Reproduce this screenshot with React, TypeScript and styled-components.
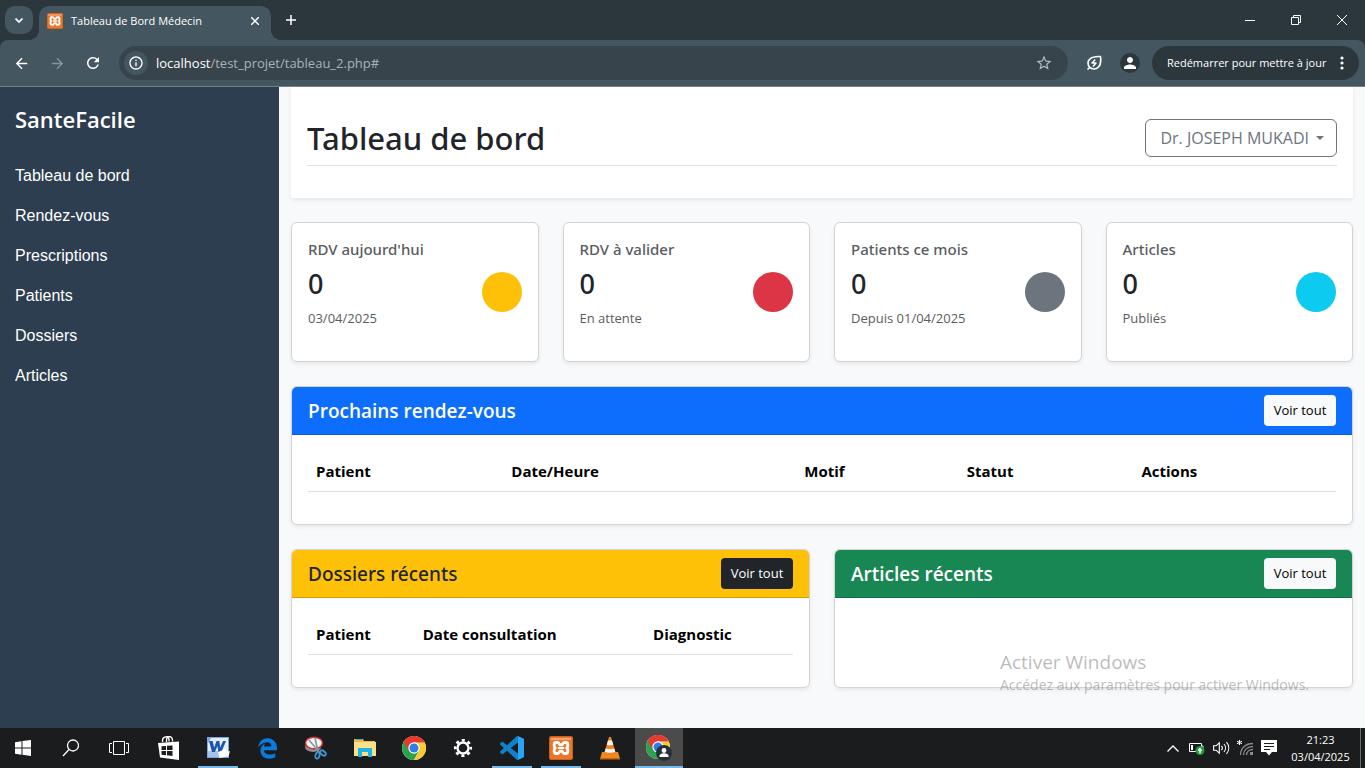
import React from 'react';
import styled, { createGlobalStyle, css } from 'styled-components';
import { MdArrowBack, MdArrowForward, MdInfoOutline, MdPerson, MdRefresh, MdStarBorder } from 'react-icons/md';
import { FaEdgeLegacy } from 'react-icons/fa6';

const ui = `'Segoe UI', 'Open Sans', 'Noto Sans', sans-serif`;
const medium = `'Segoe UI', 'Noto Sans', 'Open Sans', sans-serif`;

const GlobalStyle = createGlobalStyle`
  *, *::before, *::after { box-sizing: border-box; }
  body { margin: 0; background: #f8f9fa; color: #212529; font-family: ${ui}; font-size: 16px; line-height: 24px; }
  button, input { font: inherit; color: inherit; }
  button { border: 0; background: none; padding: 0; cursor: pointer; }
  a { color: inherit; text-decoration: none; }
  h1, h2, h3, p, ul { margin: 0; padding: 0; }
  svg { display: block; flex: none; }
`;

const Screen = styled.div`
  display: flex;
  flex-direction: column;
  min-height: 100vh;
`;

/* ---------- browser window ---------- */

const TabStrip = styled.div`
  display: flex;
  height: 40px;
  padding: 6px 0 0 5px;
  background: #2c373d;
  color: #fff;
`;

const TabSearch = styled.button`
  display: grid;
  place-items: center;
  width: 28px;
  height: 28px;
  margin-right: 6px;
  border-radius: 10px;
  background: #445660;
`;

const Tab = styled.div`
  position: relative;
  display: flex;
  align-items: center;
  gap: 8px;
  width: 232px;
  padding: 0 7px 5px 8px;
  border-radius: 10px 10px 0 0;
  background: #445660;
  font-size: 11px;
  line-height: 16px;

  &::before, &::after {
    content: '';
    position: absolute;
    bottom: 0;
    width: 10px;
    height: 10px;
  }
  &::before { left: -10px; background: radial-gradient(circle at 0 0, transparent 10px, #445660 10px); }
  &::after { right: -10px; background: radial-gradient(circle at 100% 0, transparent 10px, #445660 10px); }
`;

const TabTitle = styled.span`
  flex: 1;
  white-space: nowrap;
`;

const StripButton = styled.button<{ $wide?: boolean }>`
  display: grid;
  place-items: center;
  width: ${p => (p.$wide ? 46 : 18)}px;
  height: ${p => (p.$wide ? 28 : 18)}px;
`;

const NewTab = styled(StripButton)`
  width: 28px;
  height: 28px;
  margin-left: 6px;
`;

const WindowButtons = styled.div`
  display: flex;
  margin-left: auto;
`;

const ToolbarBack = styled.div`
  background: #2c373d;
  border-bottom: 1px solid #748087;
`;

const Toolbar = styled.div`
  display: flex;
  align-items: center;
  height: 46px;
  padding: 0 6px 0 3px;
  border-radius: 8px 8px 0 0;
  background: #445660;
  color: #fff;
`;

const ToolButton = styled.button<{ $dim?: boolean }>`
  display: grid;
  place-items: center;
  width: 36px;
  height: 34px;
  color: ${p => (p.$dim ? '#87939a' : '#fff')};
`;

const AddressBar = styled.form`
  display: flex;
  flex: 1;
  align-items: center;
  height: 34px;
  margin: 0 8px;
  padding: 0 6px 0 5px;
  border-radius: 17px;
  background: #38444b;
  font-size: 13px;
  line-height: 20px;
`;

const SiteInfo = styled.button`
  display: grid;
  place-items: center;
  width: 24px;
  height: 24px;
  margin-right: 8px;
  border-radius: 50%;
  background: #445660;
`;

const PathInput = styled.input`
  flex: 1;
  min-width: 0;
  padding: 0;
  border: 0;
  outline: 0;
  background: none;
  color: #a9b2b6;
`;

const Avatar = styled.span`
  display: grid;
  place-items: center;
  width: 20px;
  height: 20px;
  border-radius: 50%;
  background: #2c373d;
`;

const UpdateButton = styled.button`
  display: flex;
  align-items: center;
  justify-content: space-between;
  width: 207px;
  height: 34px;
  margin-left: 4px;
  padding: 0 15px;
  border-radius: 17px;
  background: #2c373d;
  font-size: 11px;
  white-space: nowrap;
`;

/* ---------- dashboard page ---------- */

const Page = styled.div`
  position: relative;
  display: flex;
  flex: 1;
`;

const Sidebar = styled.nav`
  flex: 0 0 279px;
  padding: 15px;
  background: #2c3e50;
  color: #fff;
`;

const Brand = styled.h2`
  margin-bottom: 20px;
  font-size: 22px;
  font-weight: 600;
  line-height: 34px;
`;

const NavList = styled.ul`
  list-style: none;
`;

const NavLink = styled.a`
  display: block;
  padding: 8px 0;
  font: 16px/24px 'Liberation Sans', Arial, sans-serif;
`;

const Main = styled.main`
  flex: 1;
  min-width: 0;
  padding: 0 12px 24px;
`;

const softShadow = css`
  box-shadow: 0 2px 4px rgba(0, 0, 0, 0.075);
`;

const PageHeader = styled.header`
  margin-bottom: 24px;
  padding: 16px 16px 32px;
  background: #fff;
  ${softShadow}
`;

const HeaderRow = styled.div`
  display: flex;
  align-items: center;
  justify-content: space-between;
  padding: 16px 0 8px;
  border-bottom: 1px solid #dee2e6;
`;

const PageTitle = styled.h1`
  font-family: ${medium};
  font-size: 31px;
  font-weight: 500;
  line-height: 38px;
`;

const UserMenu = styled.button`
  display: flex;
  align-items: center;
  gap: 7px;
  height: 38px;
  padding: 0 12px 0 14px;
  border: 1px solid #6c757d;
  border-radius: 6px;
  color: #6c757d;

  &::after {
    content: '';
    border: 4px solid transparent;
    border-top-color: currentColor;
    border-bottom: 0;
  }
`;

const StatGrid = styled.section`
  display: grid;
  grid-template-columns: repeat(4, 1fr);
  gap: 24px;
  margin-bottom: 24px;
`;

const Card = styled.article`
  border: 1px solid #d2d3d4;
  border-radius: 6px;
  background: #fff;
  overflow: hidden;
  ${softShadow}
`;

const StatBody = styled.div`
  display: flex;
  align-items: center;
  justify-content: space-between;
  padding: 16px;
`;

const StatLabel = styled.h3`
  margin-bottom: 8px;
  color: #595c5f;
  font-family: ${medium};
  font-size: 15px;
  font-weight: 500;
  line-height: 20px;
`;

const StatValue = styled.p`
  margin-bottom: 7px;
  font-family: ${medium};
  font-size: 27px;
  font-weight: 500;
  line-height: 34px;
`;

const StatNote = styled.p`
  margin-bottom: 16px;
  color: #595c5f;
  font-size: 13px;
  line-height: 21px;
`;

const Dot = styled.span<{ $color: string }>`
  flex: none;
  width: 40px;
  height: 40px;
  border-radius: 50%;
  background: ${p => p.$color};
`;

const PanelGrid = styled.section`
  display: grid;
  grid-template-columns: repeat(2, 1fr);
  gap: 24px;
`;

const WidePanel = styled(Card)`
  grid-column: 1 / -1;
`;

const PanelHeader = styled.header<{ $bg: string; $dark?: boolean }>`
  display: flex;
  align-items: center;
  justify-content: space-between;
  padding: 8px 16px;
  border-bottom: 1px solid rgba(0, 0, 0, 0.175);
  background: ${p => p.$bg};
  color: ${p => (p.$dark ? '#212529' : '#fff')};
`;

const PanelTitle = styled.h2<{ $medium?: boolean }>`
  font-family: ${p => (p.$medium ? medium : ui)};
  font-size: 19px;
  font-weight: ${p => (p.$medium ? 500 : 600)};
  line-height: 26px;
`;

const SmallButton = styled.a<{ $dark?: boolean }>`
  min-width: 72px;
  padding: 5px 9px;
  border-radius: 4px;
  background: ${p => (p.$dark ? '#212529' : '#f8f9fa')};
  color: ${p => (p.$dark ? '#fff' : '#000')};
  font-size: 13px;
  line-height: 21px;
  text-align: center;
`;

const PanelBody = styled.div`
  padding: 16px;
`;

const Table = styled.table`
  width: 100%;
  margin-bottom: 16px;
  border-collapse: collapse;
  table-layout: fixed;
`;

const HeadCell = styled.th<{ $share: number }>`
  width: ${p => p.$share}%;
  padding: 8px;
  border-bottom: 1px solid #dee2e6;
  color: #000;
  font-size: 15px;
  font-weight: 700;
  line-height: 24px;
  text-align: left;
`;

const Watermark = styled.aside`
  position: absolute;
  right: 56px;
  bottom: 33px;
  color: rgba(120, 120, 120, 0.5);
  font-size: 14px;
  line-height: 20px;
  pointer-events: none;
`;

const WatermarkTitle = styled.p`
  font-size: 19px;
  line-height: 26px;
`;

/* ---------- desktop taskbar ---------- */

const Taskbar = styled.footer`
  display: flex;
  height: 40px;
  background: #1b1c1d;
  color: #fff;
`;

const SystemButtons = styled.div`
  display: flex;
  margin-right: 1px;
`;

const SystemButton = styled.button`
  display: grid;
  place-items: center;
  width: 48px;
  padding-right: 2px;
`;

const Apps = styled.div`
  display: flex;
  gap: 1px;
`;

const AppButton = styled.button<{ $running?: boolean; $active?: boolean }>`
  position: relative;
  display: grid;
  place-items: center;
  width: 48px;
  background: ${p => (p.$active ? '#4b4b4c' : 'none')};

  &::after {
    content: '';
    display: ${p => (p.$running || p.$active ? 'block' : 'none')};
    position: absolute;
    bottom: 0;
    left: ${p => (p.$active ? 0 : 4)}px;
    right: ${p => (p.$active ? 0 : 4)}px;
    height: 2px;
    background: #76b9ed;
  }
`;

const Tray = styled.div`
  display: flex;
  align-items: center;
  margin-left: auto;
`;

const TrayButton = styled.button`
  display: grid;
  place-items: center;
  width: 24px;
  height: 40px;
`;

const Clock = styled.button`
  width: 79px;
  font-size: 11px;
  line-height: 17px;
  text-align: center;
`;

const ShowDesktop = styled.button`
  width: 5px;
  height: 40px;
  border-left: 1px solid #6d6e6f;
`;

/* ---------- drawings ---------- */

const XamppIcon = ({ size }: { size: number }) => (
  <svg width={size} height={size} viewBox="0 0 24 24">
    <rect width="24" height="24" rx="2" fill="#c9601c" />
    <rect x="1" y="1" width="22" height="22" rx="1.500" fill="#ee7427" />
    <path d="M2 2h20v2H2z" fill="#f6a572" />
    <g fill="none" stroke="#fff" strokeWidth="2.900" strokeLinejoin="round" strokeLinecap="round">
      <path d="M7.200 6.500h1.300q1 0 1.500 1l.800 1.300h2.400l.800-1.300q.500-1 1.500-1h1.300q2 0 2 2v1.300q0 1.200-1 2.200 1 1 1 2.200v1.300q0 2-2 2h-1.300q-1 0-1.500-1l-.800-1.300h-2.400l-.800 1.300q-.500 1-1.500 1H7.200q-2 0-2-2v-1.300q0-1.200 1-2.200-1-1-1-2.200V8.500q0-2 2-2z" />
      <path d="M9.500 12h5" strokeWidth="2" />
    </g>
  </svg>
);

const ChromeIcon = () => (
  <svg width="24" height="24" viewBox="0 0 24 24">
    <circle cx="12" cy="12" r="12" fill="#fff" />
    <path d="M12 12 1.610 6A12 12 0 0 0 12 24l5.200-9z" fill="#2ba24c" />
    <path d="M12 6.500h10.700A12 12 0 0 1 12 24l5-9.200z" fill="#fdcb2f" />
    <path d="M1.610 6A12 12 0 0 1 22.800 6.600H12L7 15z" fill="#e33b2e" />
    <circle cx="12" cy="12" r="5.700" fill="#fff" />
    <circle cx="12" cy="12" r="4.500" fill="#2f7de9" />
  </svg>
);

const ChromeProfileIcon = () => (
  <svg width="26" height="26" viewBox="0 0 26 26">
    <ChromeIcon />
    <circle cx="18" cy="18" r="8" fill="#25313a" />
    <circle cx="18" cy="15.500" r="2.400" fill="#fff" />
    <path d="M13.500 22v-1c0-2 3-2.700 4.500-2.700s4.500.700 4.500 2.700v1z" fill="#fff" />
  </svg>
);

const WindowsIcon = () => (
  <svg width="16" height="16" viewBox="0 0 16 16" fill="#fff">
    <path d="M0 2.200 6.500 1.300V7.500H0zM7.500 1.100 16 0v7.500H7.500zM0 8.500h6.500v6.200L0 13.800zM7.500 8.500H16V16l-8.500-1.200z" />
  </svg>
);

const SearchIcon = () => (
  <svg width="18" height="18" viewBox="0 0 18 18" fill="none" stroke="#fff" strokeWidth="1.300">
    <circle cx="11" cy="6.500" r="5.500" />
    <path d="M7 10.500 1 17" />
  </svg>
);

const TaskViewIcon = () => (
  <svg width="20" height="16" viewBox="0 0 20 16" fill="none" stroke="#fff">
    <path d="M4.500 1.500h11v13h-11zM3 3.500H.500v9H3M17 3.500h2.500v9H17" />
  </svg>
);

const StoreIcon = () => (
  <svg width="22" height="24" viewBox="0 0 22 24">
    <path d="M4.500 6V4.500c0-4.500 6-5 6.500-1V5.500M8.500 6V4C8.500-.500 14-.500 14.500 4v1.500" fill="none" stroke="#fff" strokeWidth="1.300" />
    <path d="M0 7 21 5.500V24L2 21.500z" fill="#fff" />
    <path d="M3.500 10.200 8 9.900V14H3.500zM9 9.800l5.500-.400V14H9zM3.500 15H8v4.200l-4.500-.500zM9 15h5.500v4.900L9 19.300z" fill="#1b1c1d" />
  </svg>
);

const WordIcon = () => (
  <svg width="24" height="24" viewBox="0 0 24 24">
    <path d="M1 1h22v21H1z" fill="#7ba6dc" />
    <path d="M5 2h17v19H2V7z" fill="#e3edf8" />
    <path d="M2 15h14l6 6H2z" fill="#a3c3ea" />
    <path d="M3 5h3.600l1.600 6.500L10.500 5h2.800l.900 6.500L17 5h3l-4.600 11h-3l-1-6-2.500 6H6z" fill="#1c55ab" />
    <path d="M12 16l8-3 .700 3 3.300-1-1.500 5-9 2z" fill="#fff" />
  </svg>
);

const SnipIcon = () => (
  <svg width="24" height="24" viewBox="0 0 24 24">
    <ellipse cx="9" cy="11" rx="8" ry="5" fill="#8d8f92" />
    <ellipse cx="10" cy="7" rx="8.500" ry="5.800" fill="#f4f4f4" stroke="#c8323a" strokeWidth="1.500" />
    <path d="M5 4l11 13M11 2l3 14" stroke="#8b959d" strokeWidth="1.600" />
    <g fill="none" stroke="#3d97cf" strokeWidth="1.800">
      <ellipse cx="13.500" cy="19.500" rx="2" ry="3.200" transform="rotate(15 13.500 19.500)" />
      <ellipse cx="19" cy="17" rx="2" ry="3.200" transform="rotate(-50 19 17)" />
    </g>
  </svg>
);

const FolderIcon = () => (
  <svg width="22" height="20" viewBox="0 0 22 20">
    <path d="M0 1h9l1 2h11v15H0z" fill="#e9b94a" />
    <path d="M2 1h6v1H2z" fill="#42a5d8" />
    <path d="M0 4h22v14H0z" fill="#fbe08a" />
    <path d="M4 10h14v9h-4v-5H8v5H4z" fill="#22b3e6" />
  </svg>
);

const GearIcon = () => (
  <svg width="20" height="20" viewBox="0 0 20 20" fill="none" stroke="#fff">
    <circle cx="10" cy="10" r="5.500" strokeWidth="2.400" />
    <circle cx="10" cy="10" r="7.800" strokeWidth="2.600" strokeDasharray="3.060 3.066" strokeDashoffset="1.530" />
  </svg>
);

const CodeIcon = () => (
  <svg width="24" height="24" viewBox="0 0 24 24">
    <path
      fill="#1281cc"
      d="M23.150 2.587L18.210.210a1.494 1.494 0 0 0-1.705.290l-9.460 8.630-4.120-3.128a.999.999 0 0 0-1.276.057L.327 7.261A1 1 0 0 0 .326 8.740L3.899 12 .326 15.260a1 1 0 0 0 .001 1.479L1.650 17.940a.999.999 0 0 0 1.276.057l4.120-3.128 9.460 8.630a1.492 1.492 0 0 0 1.704.290l4.942-2.377A1.500 1.500 0 0 0 24 20.060V3.939a1.500 1.500 0 0 0-.850-1.352zm-5.146 14.861L10.826 12l7.178-5.448v10.896z"
    />
    <path d="M18 .200l5.150 2.387A1.500 1.500 0 0 1 24 3.940v16.120a1.500 1.500 0 0 1-.850 1.350L18 23.800z" fill="#2aa5f2" />
  </svg>
);

const VlcIcon = () => (
  <svg width="22" height="24" viewBox="0 0 22 24">
    <path d="M3 16h16l2 7H1z" fill="#f08a1c" />
    <path d="M1 22h20v1.500H1z" fill="#c96408" />
    <path d="M10 1h2l5 17c-2 2-10 2-12 0z" fill="#f5821f" />
    <path d="M9 4.500h4l1.200 4.200c-1.500.800-5 .800-6.400 0zM6.800 12.300c2 1.200 6.400 1.200 8.400 0l1.100 3.500c-2.600 1.500-8 1.500-10.600 0z" fill="#f3f3f3" />
  </svg>
);

const LeafIcon = () => (
  <svg width="16" height="16" viewBox="0 0 16 16" fill="none" stroke="#fff" strokeWidth="1.600" strokeLinejoin="round">
    <path d="M14.500 1.500c.500 4 .500 8-2 10.500-2.700 2.700-6.500 2.500-8.700.400C1.500 10 1.300 6.300 4 3.800 6.500 1.500 10.500 1.300 14.500 1.500zM4 12.200 1.500 14.500" />
    <path d="M9.200 4.500 6 8h4L7 11.500" strokeWidth="1.400" />
  </svg>
);

const MinimizeIcon = () => (
  <svg width="10" height="10" stroke="#fff"><path d="M0 5.500h10" /></svg>
);
const RestoreIcon = () => (
  <svg width="10" height="10" fill="none" stroke="#fff"><path d="M.500 2.500h7v7h-7zM2.500 2.500v-2h7v7h-2" /></svg>
);
const CloseIcon = ({ size, weight }: { size: number; weight: number }) => (
  <svg width={size} height={size} viewBox="0 0 10 10" stroke="#fff" strokeWidth={weight}><path d="M0 0l10 10M10 0 0 10" /></svg>
);
const PlusIcon = () => (
  <svg width="10" height="10" stroke="#fff" strokeWidth="1.500"><path d="M5 0v10M0 5h10" /></svg>
);
const ChevronDown = () => (
  <svg width="8" height="5" viewBox="0 0 8 5" fill="none" stroke="#fff" strokeWidth="1.700"><path d="M.500.500 4 4 7.500.500" /></svg>
);
const DotsIcon = () => (
  <svg width="4" height="16" fill="#fff"><circle cx="2" cy="3" r="1.600" /><circle cx="2" cy="8" r="1.600" /><circle cx="2" cy="13" r="1.600" /></svg>
);

const ChevronUp = () => (
  <svg width="12" height="7" viewBox="0 0 12 7" fill="none" stroke="#fff" strokeWidth="1.300"><path d="M.500 6.500 6 1l5.500 5.500" /></svg>
);
const BatteryIcon = () => (
  <svg width="16" height="14" viewBox="0 0 16 14">
    <path d="M.500 2.500h12v8H.500zM13 5h1v3h-1" fill="none" stroke="#fff" />
    <path d="M2 4h2v5H2z" fill="#fff" />
    <circle cx="11" cy="9.500" r="4.500" fill="#1d9a3a" />
    <path d="m11 6.500 2.300 2.700-1.600 1.200v2h-1.400v-2l-1.600-1.200z" fill="#fff" />
  </svg>
);
const SpeakerIcon = () => (
  <svg width="17" height="14" viewBox="0 0 17 14" fill="none" stroke="#fff" strokeWidth="1.100">
    <path d="M.600 4.800h2.500L6.300 1.800v10.400L3.100 9.200H.600zM8.500 4.800c1 1.300 1 3.100 0 4.400M11 3c2 2.300 2 5.700 0 8M13.500 1.200c3 3.500 3 8.100 0 11.600" />
  </svg>
);
const WifiIcon = () => (
  <svg width="17" height="16" viewBox="0 0 17 16" fill="none">
    <g stroke="#8b8c8d" strokeWidth="1.300">
      <path d="M3.500 15C3.500 8.500 8.500 3.500 16 3.500M6.500 15c0-5 4-8.500 9.500-8.500M9.500 15c0-3.500 3-5.500 6.500-5.500" />
    </g>
    <path d="M13 12h3v3h-3z" fill="#8b8c8d" />
    <path d="M2.500 0v5M0 1.200l5 2.600M5 1.200 0 3.800" stroke="#fff" />
  </svg>
);
const MessageIcon = () => (
  <svg width="16" height="16" viewBox="0 0 16 16">
    <path d="M0 0h16v12h-5l-3 3.500L5 12H0z" fill="#fff" />
    <path d="M3 3.500h10M3 6.500h10M3 9.500h6" stroke="#1b1c1d" />
  </svg>
);

/* ---------- data ---------- */

const navItems = ['Tableau de bord', 'Rendez-vous', 'Prescriptions', 'Patients', 'Dossiers', 'Articles'];

const stats = [
  { label: "RDV aujourd'hui", value: 0, note: '03/04/2025', color: '#ffc107' },
  { label: 'RDV à valider', value: 0, note: 'En attente', color: '#dc3545' },
  { label: 'Patients ce mois', value: 0, note: 'Depuis 01/04/2025', color: '#6c757d' },
  { label: 'Articles', value: 0, note: 'Publiés', color: '#0dcaf0' },
];

type Column = { name: string; share: number };

const appointmentColumns: Column[] = [
  { name: 'Patient', share: 19 },
  { name: 'Date/Heure', share: 28.5 },
  { name: 'Motif', share: 15.8 },
  { name: 'Statut', share: 17 },
  { name: 'Actions', share: 19.7 },
];

const recordColumns: Column[] = [
  { name: 'Patient', share: 22 },
  { name: 'Date consultation', share: 47.5 },
  { name: 'Diagnostic', share: 30.5 },
];

const apps = [
  { name: 'Store', icon: <StoreIcon /> },
  { name: 'Word', icon: <WordIcon />, running: true },
  { name: 'Edge', icon: <FaEdgeLegacy size={21} color="#0b7bdb" /> },
  { name: 'Outil Capture', icon: <SnipIcon /> },
  { name: 'Explorateur', icon: <FolderIcon /> },
  { name: 'Chrome', icon: <ChromeIcon /> },
  { name: 'Paramètres', icon: <GearIcon /> },
  { name: 'Visual Studio Code', icon: <CodeIcon />, running: true },
  { name: 'XAMPP', icon: <XamppIcon size={24} />, running: true },
  { name: 'VLC', icon: <VlcIcon /> },
  { name: 'Chrome (profil)', icon: <ChromeProfileIcon />, active: true },
];

function HeadingTable({ columns }: { columns: Column[] }) {
  return (
    <Table>
      <thead>
        <tr>{columns.map(c => <HeadCell key={c.name} scope="col" $share={c.share}>{c.name}</HeadCell>)}</tr>
      </thead>
      <tbody />
    </Table>
  );
}

export default function App() {
  return (
    <Screen>
      <GlobalStyle />
      <TabStrip>
        <TabSearch aria-label="Rechercher dans les onglets"><ChevronDown /></TabSearch>
        <Tab>
          <XamppIcon size={16} />
          <TabTitle>Tableau de Bord Médecin</TabTitle>
          <StripButton aria-label="Fermer l'onglet"><CloseIcon size={8} weight={1.8} /></StripButton>
        </Tab>
        <NewTab aria-label="Nouvel onglet"><PlusIcon /></NewTab>
        <WindowButtons>
          <StripButton $wide aria-label="Réduire"><MinimizeIcon /></StripButton>
          <StripButton $wide aria-label="Restaurer"><RestoreIcon /></StripButton>
          <StripButton $wide aria-label="Fermer"><CloseIcon size={10} weight={1} /></StripButton>
        </WindowButtons>
      </TabStrip>
      <ToolbarBack>
        <Toolbar>
          <ToolButton aria-label="Précédent"><MdArrowBack size={17} /></ToolButton>
          <ToolButton $dim aria-label="Suivant"><MdArrowForward size={17} /></ToolButton>
          <ToolButton aria-label="Actualiser"><MdRefresh size={18} /></ToolButton>
          <AddressBar onSubmit={e => e.preventDefault()}>
            <SiteInfo type="button" aria-label="Informations sur le site"><MdInfoOutline size={16} /></SiteInfo>
            <label htmlFor="address">localhost</label>
            <PathInput id="address" defaultValue="/test_projet/tableau_2.php#" />
            <ToolButton type="button" $dim aria-label="Favoris"><MdStarBorder size={18} color="#b3babd" /></ToolButton>
          </AddressBar>
          <ToolButton aria-label="Économiseur d'énergie"><LeafIcon /></ToolButton>
          <ToolButton aria-label="Profil"><Avatar><MdPerson size={18} /></Avatar></ToolButton>
          <UpdateButton>Redémarrer pour mettre à jour<DotsIcon /></UpdateButton>
        </Toolbar>
      </ToolbarBack>

      <Page>
        <Sidebar>
          <Brand>SanteFacile</Brand>
          <NavList>
            {navItems.map(item => <li key={item}><NavLink href="#">{item}</NavLink></li>)}
          </NavList>
        </Sidebar>
        <Main>
          <PageHeader>
            <HeaderRow>
              <PageTitle>Tableau de bord</PageTitle>
              <UserMenu aria-haspopup="menu">Dr. JOSEPH MUKADI</UserMenu>
            </HeaderRow>
          </PageHeader>
          <StatGrid>
            {stats.map(s => (
              <Card key={s.label}>
                <StatBody>
                  <div>
                    <StatLabel>{s.label}</StatLabel>
                    <StatValue>{s.value}</StatValue>
                    <StatNote>{s.note}</StatNote>
                  </div>
                  <Dot $color={s.color} />
                </StatBody>
              </Card>
            ))}
          </StatGrid>
          <PanelGrid>
            <WidePanel>
              <PanelHeader $bg="#0d6efd">
                <PanelTitle>Prochains rendez-vous</PanelTitle>
                <SmallButton href="#">Voir tout</SmallButton>
              </PanelHeader>
              <PanelBody>
                <HeadingTable columns={appointmentColumns} />
              </PanelBody>
            </WidePanel>
            <Card>
              <PanelHeader $bg="#ffc107" $dark>
                <PanelTitle $medium>Dossiers récents</PanelTitle>
                <SmallButton href="#" $dark>Voir tout</SmallButton>
              </PanelHeader>
              <PanelBody>
                <HeadingTable columns={recordColumns} />
              </PanelBody>
            </Card>
            <Card>
              <PanelHeader $bg="#198754">
                <PanelTitle>Articles récents</PanelTitle>
                <SmallButton href="#">Voir tout</SmallButton>
              </PanelHeader>
            </Card>
          </PanelGrid>
        </Main>
        <Watermark>
          <WatermarkTitle>Activer Windows</WatermarkTitle>
          <p>Accédez aux paramètres pour activer Windows.</p>
        </Watermark>
      </Page>

      <Taskbar>
        <SystemButtons>
          <SystemButton aria-label="Démarrer"><WindowsIcon /></SystemButton>
          <SystemButton aria-label="Rechercher"><SearchIcon /></SystemButton>
          <SystemButton aria-label="Affichage des tâches"><TaskViewIcon /></SystemButton>
        </SystemButtons>
        <Apps>
          {apps.map(a => (
            <AppButton key={a.name} aria-label={a.name} $running={a.running} $active={a.active}>{a.icon}</AppButton>
          ))}
        </Apps>
        <Tray>
          <TrayButton aria-label="Icônes cachées"><ChevronUp /></TrayButton>
          <TrayButton aria-label="Batterie"><BatteryIcon /></TrayButton>
          <TrayButton aria-label="Volume"><SpeakerIcon /></TrayButton>
          <TrayButton aria-label="Réseau"><WifiIcon /></TrayButton>
          <TrayButton aria-label="Notifications"><MessageIcon /></TrayButton>
          <Clock><time dateTime="2025-04-03T21:23">21:23<br />03/04/2025</time></Clock>
          <ShowDesktop aria-label="Afficher le bureau" />
        </Tray>
      </Taskbar>
    </Screen>
  );
}
